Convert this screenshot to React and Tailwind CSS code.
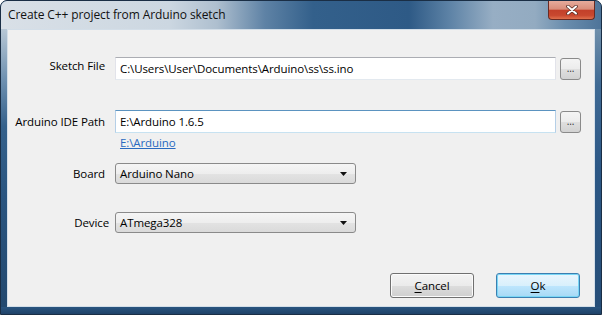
import React from 'react';

// Win7 style dialog: "Create C++ project from Arduino sketch"

function CloseButton() {
  return (
    <div className="mr-[6px] w-[47px] h-[19px] rounded-b-[4px] border border-t-0 border-[#6a2a22] p-px bg-[linear-gradient(180deg,#e6ab9c_0%,#d98d7a_45%,#c3402a_52%,#c8482f_80%,#e0704d_100%)] flex items-center justify-center">
      <svg width="12" height="10" viewBox="0 0 12 10">
        <path d="M2 1.5 L10 8.5 M10 1.5 L2 8.5" stroke="#5a3028" strokeWidth="3.6" strokeLinecap="round" />
        <path d="M2 1.5 L10 8.5 M10 1.5 L2 8.5" stroke="#ffffff" strokeWidth="2" strokeLinecap="round" />
      </svg>
    </div>
  );
}

function BrowseButton() {
  return (
    <button className="ml-[4px] w-[21px] h-[22px] rounded-[3px] border border-[#8a8a8a] bg-[linear-gradient(180deg,#f4f4f4_0%,#ececec_50%,#dfdfdf_51%,#d2d2d2_100%)] flex items-center justify-center text-[10px] leading-none text-[#333] pb-[2px]">
      ...
    </button>
  );
}

function Combo({ value, w = 'w-[241px]' }) {
  return (
    <div className={`${w} h-[21px] rounded-[3px] border border-[#8a8a8a] bg-[linear-gradient(180deg,#f5f5f5_0%,#eeeeee_50%,#e3e3e3_51%,#dadada_100%)] flex items-center justify-between pl-[4px] pr-[8px]`}>
      <span>{value}</span>
      <svg width="7" height="4" viewBox="0 0 7 4">
        <path d="M0 0 L7 0 L3.5 4 Z" fill="#111" />
      </svg>
    </div>
  );
}

export default function App() {
  return (
    <div className="w-[602px] h-[315px] font-['Open_Sans','Noto_Sans',sans-serif] text-[11.5px] tracking-[-0.1px] text-black">
      <div className="flex flex-col w-full h-full border border-[#1a2e45] rounded-t-[7px] overflow-hidden bg-[#2c5782]">
        {/* title bar */}
        <div className="h-[28px] flex items-start justify-between bg-[linear-gradient(90deg,#d9e0e7_0%,#ccd7e1_28%,#aebfcf_36%,#5e82a5_44%,#33608b_52%,#2e5a86_68%,#5f84a7_75%,#97aec4_82%,#93abc1_89%,#6a8dad_94%,#4e7499_100%)]">
          <span className="pl-[7px] mt-[6px] leading-[16px] text-[12px] text-[#111]">Create C++ project from Arduino sketch</span>
          <CloseButton />
        </div>

        <div className="flex flex-1">
          <div className="w-[6px] bg-[linear-gradient(180deg,#b7c7d5_0%,#6f91b1_18%,#35618b_35%,#2a5580_60%,#23496f_100%)]" />

          {/* client */}
          <div className="flex-1 border border-[#d3dee8] bg-[#f0f0f0] flex flex-col">
            {/* Sketch File */}
            <div className="mt-[27px] flex items-center h-[23px] pr-[13px]">
              <span className="w-[97px] text-right mb-[5px]">Sketch File</span>
              <div className="ml-[10px] flex-1 h-[23px] bg-white border border-[#e2e3ea] border-t-[#abadb3] border-b-[#e3e9ef] pl-[4px] flex items-center">
                C:\Users\User\Documents\Arduino\ss\ss.ino
              </div>
              <BrowseButton />
            </div>

            {/* Arduino IDE Path */}
            <div className="mt-[30px] flex items-center h-[23px] pr-[13px]">
              <span className="w-[97px] text-right">Arduino IDE Path</span>
              <div className="ml-[10px] flex-1 h-[23px] bg-white border border-[#b5cfe7] border-t-[#5b93c0] border-b-[#c7e2f1] pl-[4px] flex items-center">
                E:\Arduino 1.6.5
              </div>
              <BrowseButton />
            </div>

            <div className="mt-[3px] h-[14px] pl-[112px] leading-[14px]">
              <span className="text-[#2a6ac0] underline">E:\Arduino</span>
            </div>

            {/* Board */}
            <div className="mt-[13px] flex items-center h-[21px]">
              <span className="w-[97px] text-right">Board</span>
              <div className="ml-[10px]">
                <Combo value="Arduino Nano" />
              </div>
            </div>

            {/* Device */}
            <div className="mt-[28px] flex items-center h-[21px]">
              <span className="w-[101px] text-right">Device</span>
              <div className="ml-[6px]">
                <Combo value="ATmega328" />
              </div>
            </div>

            {/* buttons */}
            <div className="mt-[40px] flex justify-end gap-[22px] pr-[14px]">
              <button className="w-[84px] h-[25px] rounded-[3px] border border-[#707070] bg-[linear-gradient(180deg,#f3f3f3_0%,#ebebeb_50%,#dddddd_51%,#cfcfcf_100%)] shadow-[inset_0_0_0_1px_#fbfbfb]">
                <span className="underline underline-offset-2">C</span>ancel
              </button>
              <button className="w-[84px] h-[25px] rounded-[3px] border border-[#3c7fb1] bg-[linear-gradient(180deg,#eaf6fd_0%,#d9f0fc_50%,#bee6fd_51%,#a7d9f5_100%)] shadow-[inset_0_0_0_1px_#79d6f5]">
                <span className="underline underline-offset-2">O</span>k
              </button>
            </div>
          </div>

          <div className="w-[6px] bg-[linear-gradient(180deg,#6f8fab_0%,#3f6a94_20%,#2c5886_50%,#264e78_100%)]" />
        </div>

        <div className="h-[7px] bg-[linear-gradient(180deg,#2a5580,#1f4268)]" />
      </div>
    </div>
  );
}
